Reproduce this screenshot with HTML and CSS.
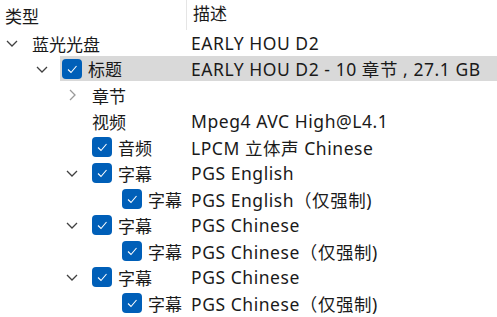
FILE: index.html
```html
<!DOCTYPE html>
<html lang="zh-CN">
<head>
    <meta charset="UTF-8">
    <title>蓝光光盘</title>
    <link rel="stylesheet" href="styles.css">
</head>
<body>

<div class="tree">
    <div class="tree-header">
        <div class="col-type">类型</div>
        <div class="col-desc">描述</div>
    </div>

    <div class="row lv0">
        <div class="gutter"><svg class="chev" viewBox="0 0 12 12"><polyline points="1,4 6,9 11,4"/></svg></div>
        <div class="body">
            <div class="name">蓝光光盘</div>
            <div class="desc">EARLY HOU D2</div>
        </div>
    </div>

    <div class="row lv1 selected">
        <div class="gutter"><svg class="chev" viewBox="0 0 12 12"><polyline points="1,4 6,9 11,4"/></svg></div>
        <div class="body">
            <div class="name"><span class="check"><svg viewBox="0 0 20 20"><polyline points="6,10.5 9,13.5 14.5,7"/></svg></span>标题</div>
            <div class="desc">EARLY HOU D2 - 10 章节 , 27.1 GB</div>
        </div>
    </div>

    <div class="row lv2">
        <div class="gutter"><svg class="chev closed" viewBox="0 0 12 12"><polyline points="4,1 9,6 4,11"/></svg></div>
        <div class="body">
            <div class="name">章节</div>
            <div class="desc"></div>
        </div>
    </div>

    <div class="row lv2">
        <div class="gutter"></div>
        <div class="body">
            <div class="name">视频</div>
            <div class="desc">Mpeg4 AVC High@L4.1</div>
        </div>
    </div>

    <div class="row lv2">
        <div class="gutter"></div>
        <div class="body">
            <div class="name"><span class="check"><svg viewBox="0 0 20 20"><polyline points="6,10.5 9,13.5 14.5,7"/></svg></span>音频</div>
            <div class="desc">LPCM 立体声 Chinese</div>
        </div>
    </div>

    <div class="row lv2">
        <div class="gutter"><svg class="chev" viewBox="0 0 12 12"><polyline points="1,4 6,9 11,4"/></svg></div>
        <div class="body">
            <div class="name"><span class="check"><svg viewBox="0 0 20 20"><polyline points="6,10.5 9,13.5 14.5,7"/></svg></span>字幕</div>
            <div class="desc">PGS English</div>
        </div>
    </div>

    <div class="row lv3">
        <div class="gutter"></div>
        <div class="body">
            <div class="name"><span class="check"><svg viewBox="0 0 20 20"><polyline points="6,10.5 9,13.5 14.5,7"/></svg></span>字幕</div>
            <div class="desc">PGS English（仅强制)</div>
        </div>
    </div>

    <div class="row lv2">
        <div class="gutter"><svg class="chev" viewBox="0 0 12 12"><polyline points="1,4 6,9 11,4"/></svg></div>
        <div class="body">
            <div class="name"><span class="check"><svg viewBox="0 0 20 20"><polyline points="6,10.5 9,13.5 14.5,7"/></svg></span>字幕</div>
            <div class="desc">PGS Chinese</div>
        </div>
    </div>

    <div class="row lv3">
        <div class="gutter"></div>
        <div class="body">
            <div class="name"><span class="check"><svg viewBox="0 0 20 20"><polyline points="6,10.5 9,13.5 14.5,7"/></svg></span>字幕</div>
            <div class="desc">PGS Chinese（仅强制)</div>
        </div>
    </div>

    <div class="row lv2">
        <div class="gutter"><svg class="chev" viewBox="0 0 12 12"><polyline points="1,4 6,9 11,4"/></svg></div>
        <div class="body">
            <div class="name"><span class="check"><svg viewBox="0 0 20 20"><polyline points="6,10.5 9,13.5 14.5,7"/></svg></span>字幕</div>
            <div class="desc">PGS Chinese</div>
        </div>
    </div>

    <div class="row lv3">
        <div class="gutter"></div>
        <div class="body">
            <div class="name"><span class="check"><svg viewBox="0 0 20 20"><polyline points="6,10.5 9,13.5 14.5,7"/></svg></span>字幕</div>
            <div class="desc">PGS Chinese（仅强制)</div>
        </div>
    </div>
</div>

</body>
</html>
```

FILE: styles.css
```css
body {
    margin: 0;
    padding: 0;
    background: #fff;
    color: #1a1a1a;
    font-family: "Noto Sans", "Noto Sans CJK SC", sans-serif;
    font-size: 17px;
}

.tree {
    width: 497px;
}

.tree-header {
    display: flex;
    height: 30px;
    align-items: center;
}

.col-type {
    width: 186px;
    padding-left: 5px;
    box-sizing: border-box;
}

.col-desc {
    height: 30px;
    line-height: 28px;
    border-left: 1px solid #e5e5e5;
    padding-left: 6px;
}

.row {
    --lv: 0;
    display: flex;
    height: 26px;
}

.lv1 { --lv: 1; }
.lv2 { --lv: 2; }
.lv3 { --lv: 3; }

.gutter {
    width: calc(30px + var(--lv) * 30px);
    flex-shrink: 0;
    display: flex;
    align-items: center;
    justify-content: flex-end;
    padding-right: 12px;
    box-sizing: border-box;
}

.chev {
    width: 12px;
    height: 12px;
    fill: none;
    stroke: #404040;
    stroke-width: 1.3;
}

.chev.closed {
    stroke: #9a9a9a;
}

.body {
    flex: 1;
    display: flex;
    align-items: center;
    padding-left: 2px;
}

.selected .body {
    background: #d9d9d9;
    height: 25px;
}

.name {
    width: calc(159px - var(--lv) * 30px);
    flex-shrink: 0;
    display: flex;
    align-items: center;
    white-space: nowrap;
}

.check {
    width: 20px;
    height: 20px;
    border-radius: 4px;
    background: #005fb8;
    margin-right: 6px;
    flex-shrink: 0;
    display: flex;
}

.check svg {
    width: 20px;
    height: 20px;
    fill: none;
    stroke: #fff;
    stroke-width: 1.1;
}

.desc {
    white-space: nowrap;
    font-size: 17.5px;
    letter-spacing: 0.55px;
}
```
